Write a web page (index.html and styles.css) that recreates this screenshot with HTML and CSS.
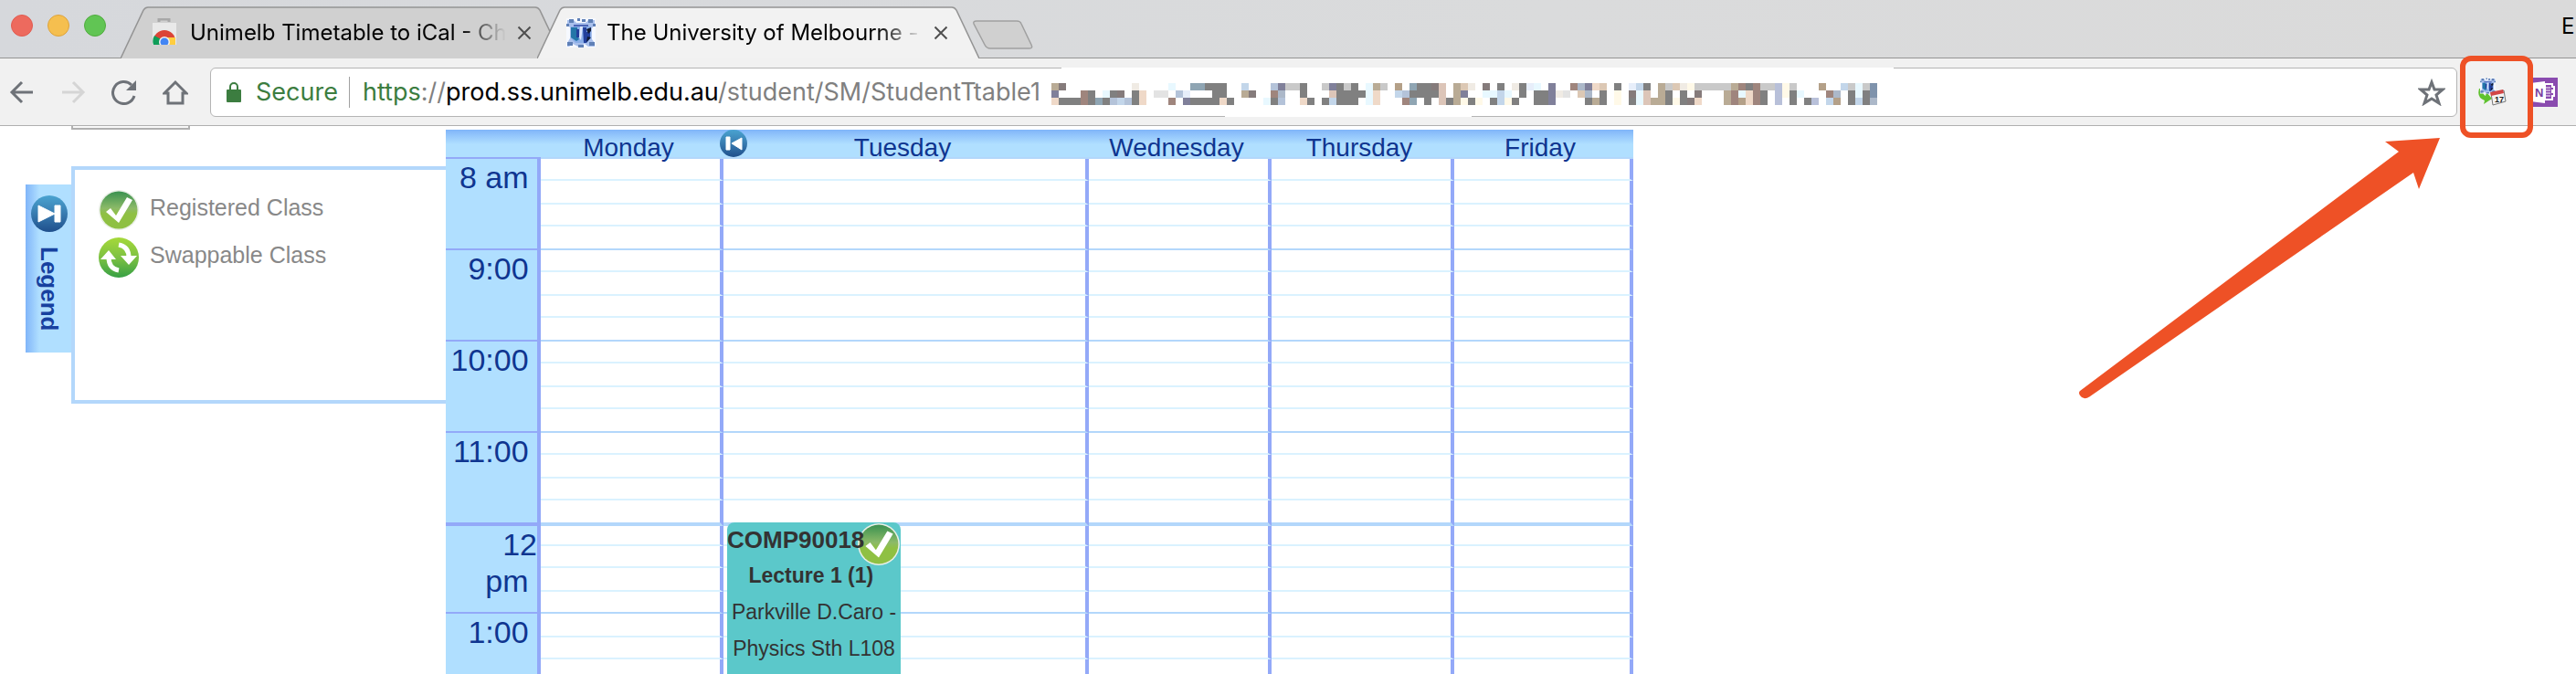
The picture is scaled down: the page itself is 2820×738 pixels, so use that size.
FILE: index.html
```html
<!DOCTYPE html>
<html lang="en">
<head>
<meta charset="utf-8">
<title>The University of Melbourne - Student Timetable</title>
<link rel="stylesheet" href="styles.css">
</head>
<body>
<svg class="defs" aria-hidden="true">
  <defs>
    <linearGradient id="blue" x1="0" y1="0" x2="0" y2="1"><stop offset="0" stop-color="#4aa3d0"/><stop offset=".45" stop-color="#3a80b4"/><stop offset="1" stop-color="#1f4f8c"/></linearGradient>
    <linearGradient id="tickfill" x1="0" y1="0" x2="0" y2="1"><stop offset="0" stop-color="#3a9150"/><stop offset=".45" stop-color="#8cba68"/><stop offset=".6" stop-color="#8fc043"/><stop offset="1" stop-color="#8fc043"/></linearGradient>
    <linearGradient id="swapfill" x1="0" y1="0" x2="0" y2="1"><stop offset="0" stop-color="#a6d93a"/><stop offset=".5" stop-color="#7dc142"/><stop offset="1" stop-color="#37a045"/></linearGradient>
    <symbol id="tick" viewBox="0 0 44 46">
      <circle cx="22" cy="23" r="22" fill="#e9efe6"/><circle cx="22" cy="23" r="20.500" fill="url(#tickfill)"/>
      <path d="M8 25l5-4 6 8L31 9l6 3-15 25z" fill="#fff"/>
    </symbol>
    <symbol id="crest" viewBox="0 0 32 32">
      <rect width="32" height="32" fill="#f6f9ff"/>
      <path d="M1 2h7l3 3h10l3-3h7v5l-3 4v12l3 4v4h-7l-4-3-7 3-6-3-4 3H1v-4l3-5V10L1 7z" fill="#a9c0ec"/>
      <path d="M3 1h5v4H3zM24 1h5v4h-5zM12 0h3v3h-3zM17 1h4v3h-4zM1 26h6v4H1zM25 26h6v4h-6zM13 29h6v3h-6zM0 6h3v3H0zM29 6h3v3h-3z" fill="#5f80b6"/>
      <path d="M5 9h22v13l-5 5H10l-5-5z" fill="#8aaee8"/>
      <path d="M5 10h7v9l2 4-3 2-6-4z" fill="#2376a8"/>
      <path d="M11 12h3v9h-3zM18 10h4v5h4v7l-4 5h-3z" fill="#22409c"/>
      <path d="M15 9h3l-2 15-2-3z" fill="#dfe9ff"/>
      <path d="M22 12l5-2v4l-3 3zM23 20l4 1-5 5z" fill="#111a33"/>
      <path d="M8 7h16v2H8z" fill="#4d66b6"/>
    </symbol>
  </defs>
</svg>

<header class="tabstrip">
  <div class="lights">
    <button class="light light-close" aria-label="Close window"></button>
    <button class="light light-min" aria-label="Minimise window"></button>
    <button class="light light-max" aria-label="Zoom window"></button>
  </div>
  <div class="tabs">
    <div class="tab">
      <svg class="tab-shape" viewBox="0 0 484 56" preserveAspectRatio="none"><path d="M0 56L25 4Q27 1 30 1H454Q457 1 459 4L484 56" fill="#d0d0d0" stroke="#949494" stroke-width="1.500"/></svg>
      <svg class="favicon" viewBox="0 0 32 32">
        <path d="M10 4V1h11v3" fill="none" stroke="#a8a8a8" stroke-width="3"/>
        <path d="M3 5h26v24H3z" fill="#e9e9e9"/>
        <clipPath id="bag"><path d="M3 5h26v24H3z"/></clipPath>
        <g clip-path="url(#bag)"><circle cx="16" cy="25" r="12" fill="#db4437"/><path d="M16 25L5 19a12 12 0 0 0-1 10h10z" fill="#0f9d58"/><path d="M16 21h12v9H18z" fill="#ffcd40"/><circle cx="16" cy="26" r="6" fill="#f1f1f1"/><circle cx="16" cy="26" r="4.500" fill="#4285f4"/></g>
      </svg>
      <span class="tab-title">Unimelb Timetable to iCal - Ch</span>
      <button class="tab-close" aria-label="Close tab"><svg viewBox="0 0 16 16"><path d="M1.500 1.500l13 13M14.500 1.500l-13 13"/></svg></button>
    </div>
    <div class="tab tab-active">
      <svg class="tab-shape" viewBox="0 0 484 56" preserveAspectRatio="none"><path d="M0 56L25 4Q27 1 30 1H454Q457 1 459 4L484 56" fill="#f2f2f2" stroke="#949494" stroke-width="1.500"/></svg>
      <svg class="favicon"><use href="#crest"/></svg>
      <span class="tab-title">The University of Melbourne -</span>
      <button class="tab-close" aria-label="Close tab"><svg viewBox="0 0 16 16"><path d="M1.500 1.500l13 13M14.500 1.500l-13 13"/></svg></button>
    </div>
  </div>
  <button class="newtab" aria-label="New tab"><svg viewBox="0 0 68 32"><path d="M5 1h44q4 0 5 3l11 23q2 4-2 4H20q-4 0-6-4L2 4q-1-3 3-3z" fill="#d0d0d0" stroke="#a0a0a0" stroke-width="1.500"/></svg></button>
  <span class="profile">E</span>
</header>

<div class="toolbar">
  <nav class="nav">
    <button class="icon" aria-label="Back"><svg viewBox="0 0 28 28"><path d="M26 14H3M14 3L3 14l11 11" fill="none" stroke="#6e7278" stroke-width="3"/></svg></button>
    <button class="icon" aria-label="Forward" disabled><svg viewBox="0 0 28 28"><path d="M2 14h23M14 3l11 11-11 11" fill="none" stroke="#d5d5d5" stroke-width="3"/></svg></button>
    <button class="icon" aria-label="Reload"><svg viewBox="0 0 28 28"><path d="M25 18A12 12 0 1 1 22 6" fill="none" stroke="#6e7278" stroke-width="3"/><path d="M27 1v11H16z" fill="#6e7278"/></svg></button>
    <button class="icon" aria-label="Home"><svg viewBox="0 0 28 28"><path d="M2 15L14 3l12 12h-4v11H6V15z" fill="none" stroke="#6e7278" stroke-width="3"/></svg></button>
  </nav>
  <div class="omnibox">
    <svg class="lock" viewBox="0 0 16 22"><path d="M4 9V5a4 4 0 0 1 8 0v4" fill="none" stroke="#3c7d40" stroke-width="2"/><rect y="8" width="16" height="14" rx="1" fill="#3c7d40"/></svg>
    <span class="secure">Secure</span>
    <div class="url" role="textbox" aria-label="Address" contenteditable="true" spellcheck="false"><span class="scheme">https</span><span class="path">://</span>prod.ss.unimelb.edu.au<span class="path">/student/SM/StudentTtable1</span></div>
    <svg class="mosaic" viewBox="0 0 912 54" aria-hidden="true"><path d="M11 0H922V3H11zM190 51H460V54H190z" fill="#fff"/><g id="blocks"></g></svg>
    <button class="icon star" aria-label="Bookmark"><svg viewBox="0 0 30 30"><path d="M15 4l3 8 9 0-7 6 3 9-8-5-8 5 3-9-7-6 9 0z" fill="none" stroke="#6e7278" stroke-width="3"/></svg></button>
  </div>
  <div class="extensions">
    <button class="ext marked" aria-label="Unimelb Timetable to iCal">
      <svg viewBox="0 0 32 32">
        <path d="M2 12q-3 10 6 13l-1 4 9-6-6-7-1 4q-4-2-3-8z" fill="#5fc22f"/>
        <svg x="3" y="0" width="17" height="18"><use href="#crest"/></svg>
        <path d="M15 17l14-3 2 12-14 4z" fill="#f4f4f4" stroke="#777"/><path d="M14 16l14-3 1 4-14 3z" fill="#d24646"/>
        <text class="cal" x="19" y="27">17</text>
      </svg>
    </button>
    <button class="ext" aria-label="OneNote">
      <svg viewBox="0 0 32 32"><rect width="32" height="32" fill="#8a4baf"/><path d="M18 7h8v3h2v4h-2v2h2v4h-2v4h-8z" fill="#8a4baf" stroke="#fff" stroke-width="2"/><path d="M18 11h6M18 14h6M18 17h6M18 20h6" stroke="#fff"/><path d="M2 6l16-2v24L2 26z" fill="#fff"/><text class="note" x="7" y="21">N</text></svg>
    </button>
  </div>
</div>

<main class="page">
  <aside class="side">
    <button class="stub" aria-label="Options"></button>
    <div class="legend">
      <button class="legend-tab"><svg viewBox="0 0 40 40"><circle cx="20" cy="20" r="20" fill="url(#blue)"/><path d="M8 11l18 9-18 9zM26 11h6v18h-6z" fill="#fff" stroke="#fff" stroke-linejoin="round"/></svg><span>Legend</span></button>
      <ul class="legend-panel">
        <li><svg><use href="#tick"/></svg>Registered Class</li>
        <li><svg viewBox="0 0 44 46"><circle cx="22" cy="23" r="22" fill="url(#swapfill)"/><g fill="none" stroke="#fff" stroke-width="5"><path d="M22 9q11 2 11 14M22 37q-11-2-11-14"/></g><path d="M24 21l18 0-9 10zM2 25h17l-8-10z" fill="#fff"/></svg>Swappable Class</li>
      </ul>
    </div>
  </aside>
  <table class="timetable">
    <colgroup><col class="c-time"><col class="c-day"><col class="c-wide"><col class="c-day"><col class="c-day"><col class="c-last"></colgroup>
    <thead><tr><th class="corner"></th><th>Monday</th><th class="has-prev"><button class="prev" aria-label="Collapse"><svg viewBox="0 0 30 30"><circle cx="15" cy="15" r="15" fill="url(#blue)"/><path d="M24 9v13l-11-7zM7 8h4v14H7z" fill="#fff" stroke="#fff" stroke-linejoin="round"/></svg></button>Tuesday</th><th>Wednesday</th><th>Thursday</th><th>Friday</th></tr></thead>
    <tbody>
      <tr class="q1"><th rowspan="4">8 am&nbsp;</th><td></td><td></td><td></td><td></td><td></td></tr>
      <tr class="q2"><td></td><td></td><td></td><td></td><td></td></tr>
      <tr class="q1"><td></td><td></td><td></td><td></td><td></td></tr>
      <tr class="q2 hour"><td></td><td></td><td></td><td></td><td></td></tr>
      <tr class="q1"><th rowspan="4">9:00&nbsp;</th><td></td><td></td><td></td><td></td><td></td></tr>
      <tr class="q2"><td></td><td></td><td></td><td></td><td></td></tr>
      <tr class="q1"><td></td><td></td><td></td><td></td><td></td></tr>
      <tr class="q2 hour"><td></td><td></td><td></td><td></td><td></td></tr>
      <tr class="q1"><th rowspan="4">10:00&nbsp;</th><td></td><td></td><td></td><td></td><td></td></tr>
      <tr class="q2"><td></td><td></td><td></td><td></td><td></td></tr>
      <tr class="q1"><td></td><td></td><td></td><td></td><td></td></tr>
      <tr class="q2 hour"><td></td><td></td><td></td><td></td><td></td></tr>
      <tr class="q1"><th rowspan="4" class="noon">11:00&nbsp;</th><td></td><td></td><td></td><td></td><td></td></tr>
      <tr class="q2"><td></td><td></td><td></td><td></td><td></td></tr>
      <tr class="q1"><td></td><td></td><td></td><td></td><td></td></tr>
      <tr class="q3 hour noon"><td></td><td></td><td></td><td></td><td></td></tr>
      <tr class="q0"><th rowspan="4">12 pm&nbsp;</th><td></td>
        <td class="has-event"><div class="event"><svg><use href="#tick"/></svg><strong class="code">COMP90018</strong><strong class="kind">Lecture 1 (1)&nbsp;</strong><span>Parkville D.Caro -</span><span>Physics Sth L108</span></div></td>
        <td></td><td></td><td></td></tr>
      <tr class="q1"><td></td><td></td><td></td><td></td><td></td></tr>
      <tr class="q2"><td></td><td></td><td></td><td></td><td></td></tr>
      <tr class="q1 hour"><td></td><td></td><td></td><td></td><td></td></tr>
      <tr class="q2"><th rowspan="4">1:00&nbsp;</th><td></td><td></td><td></td><td></td><td></td></tr>
      <tr class="q1"><td></td><td></td><td></td><td></td><td></td></tr>
      <tr class="q2"><td></td><td></td><td></td><td></td><td></td></tr>
      <tr class="q1 hour"><td></td><td></td><td></td><td></td><td></td></tr>
    </tbody>
  </table>
</main>
<svg class="arrow" viewBox="0 0 396 288" aria-hidden="true"><path d="M1 278L350 16 335 5 395 1 372 57 366 39 12 284Q5 289 1 283 -1 280 1 278z" fill="#ee5126"/></svg>
<script src="mosaic.js"></script>
</body>
</html>
```
FILE: styles.css
```css
* { box-sizing: border-box; }
html, body { height: 100%; margin: 0; }
body { display: flex; flex-direction: column; position: relative; overflow: hidden; background: #fff; font-family: Inter, "Liberation Sans", sans-serif; }
button { padding: 0; border: 0; background: none; font: inherit; color: inherit; }
svg { display: block; }
.defs { position: absolute; width: 0; height: 0; }

.tabstrip { display: flex; align-items: flex-end; flex: none; height: 64px; border-bottom: 1px solid #949494; background: linear-gradient(90deg, #d6d8dc, #dadbdc 60%, #dadada); }
.lights { display: flex; align-self: flex-start; gap: 16px; padding: 16px 16px 0 12px; }
.light { width: 24px; height: 24px; border: 1px solid #e15b50; border-radius: 50%; background: #ed6a5e; }
.light-min { border-color: #dda33c; background: #f5bf4f; }
.light-max { border-color: #50ac3e; background: #61c554; }
.tabs { display: flex; margin-bottom: -1px; }
.tab { display: flex; align-items: center; gap: 12px; position: relative; width: 484px; height: 57px; padding: 0 34px 0 32px; }
.tab + .tab { margin-left: -28px; }
.tab-shape { position: absolute; inset: 0; width: 100%; height: 100%; }
.favicon { position: relative; flex: none; width: 32px; height: 32px; }
.tab-title { flex: 1; position: relative; overflow: hidden; white-space: nowrap; font-size: 24px; line-height: 32px; -webkit-mask-image: linear-gradient(90deg, #000 86%, transparent); mask-image: linear-gradient(90deg, #000 86%, transparent); }
.tab-close { position: relative; }
.tab-close svg { width: 16px; height: 16px; fill: none; stroke: #4f4f4f; stroke-width: 2; }
.newtab { align-self: flex-start; padding-top: 22px; margin-left: -8px; }
.newtab svg { width: 68px; height: 32px; }
.profile { align-self: flex-start; width: 16px; margin-left: auto; padding-top: 14px; font-size: 24px; line-height: 30px; }

.toolbar { display: flex; align-items: center; flex: none; height: 74px; padding-right: 20px; border-bottom: 1px solid #b0b0b0; background: #f1f1f1; }
.nav { display: flex; gap: 28px; padding: 0 24px 0 10px; }
.icon svg { width: 28px; height: 28px; }
.omnibox { display: flex; align-items: center; flex: 1; height: 54px; padding: 0 12px 0 17px; border: 1px solid #b4b4b4; border-radius: 6px; background: #fff; font-size: 27px; line-height: 34px; }
.lock { width: 16px; height: 22px; margin-right: 16px; }
.secure { margin-right: 12px; color: #3c7d40; }
.url { padding-left: 14px; border-left: 1px solid #a0a0a0; white-space: nowrap; outline: none; }
.scheme { color: #3c7d40; }
.path { color: #808080; }
.mosaic { flex: none; width: 912px; height: 54px; margin: -1px 0 -1px 12px; overflow: visible; }
.star { margin-left: auto; }
.star svg { width: 30px; height: 30px; }
.extensions { display: flex; gap: 24px; padding-left: 22px; }
.ext { position: relative; }
.ext svg { width: 32px; height: 32px; }
.ext svg svg { width: 17px; height: 18px; }
.marked::after { content: ""; position: absolute; z-index: 2; inset: -24px -29px -34px -19px; border: 6px solid #ee5126; border-radius: 12px; }
.cal { fill: #222; font: bold 9px "Liberation Sans", sans-serif; }
.note { fill: #7a3fa0; font: bold 13px "Liberation Sans", sans-serif; }

.page { display: flex; flex: 1; min-height: 0; overflow: hidden; font-family: "Liberation Sans", Arial, sans-serif; }
.side { display: flex; flex-direction: column; flex: none; width: 488px; }
.stub { width: 130px; height: 4px; margin-left: 78px; border: 2px solid #b0b0b0; border-top: 0; background: #f8f8f8; }
.legend { display: flex; margin-top: 40px; padding-left: 28px; align-items: flex-start; }
.legend-tab { display: flex; flex-direction: column; align-items: center; gap: 16px; width: 50px; height: 184px; margin-top: 20px; padding: 12px 2px 0 4px; background: linear-gradient(90deg, #80b5f9, #b0dfff 30%); color: #17419f; font-size: 26px; font-weight: bold; line-height: 30px; }
.legend-tab svg { width: 40px; height: 40px; }
.legend-tab span { writing-mode: vertical-rl; }
.legend-panel { flex: 1; height: 260px; margin: 0; padding: 21px 0 0 26px; border: 4px solid #b3d7fb; border-right: 0; list-style: none; color: #888; font-size: 25px; }
.legend-panel li { display: flex; align-items: center; gap: 12px; height: 46px; margin-bottom: 6px; line-height: 40px; padding-bottom: 6px; }
.legend-panel svg { flex: none; width: 44px; height: 46px; margin-bottom: -6px; }

.timetable { align-self: flex-start; width: 1300px; margin-top: 4px; border-spacing: 0; table-layout: fixed; color: #0f3590; }
.c-time { width: 104px; }
.c-day { width: 200px; }
.c-wide { width: 400px; }
.c-last { width: 196px; }
.timetable thead tr { height: 32px; background: linear-gradient(#80b5f9, #b0dfff 50%); }
.timetable thead th { padding: 11px 8px 1px 0; border-bottom: 2px solid #b3d7fb; font-size: 28px; font-weight: normal; line-height: 18px; }
.timetable thead .corner { border-color: #93a9f8; }
.has-prev { position: relative; }
.prev { position: absolute; left: -4px; top: 0; }
.prev svg { width: 30px; height: 30px; }
.timetable tbody th { padding: 0; border-right: 4px solid #93a9f8; border-bottom: 2px solid #93a9f8; background: #b0dfff; font-size: 34px; font-weight: normal; line-height: 40px; text-align: right; vertical-align: top; }
.timetable td { padding: 0; border-right: 4px solid #93a9f8; border-bottom: 2px solid #daf2ff; }
.timetable .hour td { border-bottom-color: #b3d7fb; }
.timetable .noon td, .timetable th.noon { border-bottom-width: 4px; }
.q0 { height: 22px; }
.q1 { height: 24px; }
.q2 { height: 26px; }
.q3 { height: 28px; }
.has-event { position: relative; }
.event { display: flex; flex-direction: column; position: absolute; z-index: 1; top: -4px; left: 4px; width: 190px; height: 200px; border-radius: 8px; background: #5bc8ca; color: #333; font-size: 23px; line-height: 40px; text-align: center; white-space: nowrap; }
.event svg { position: absolute; right: 0; top: 0; width: 48px; height: 48px; }
.event .code { position: relative; text-align: left; font-size: 26px; line-height: 38px; }

.arrow { position: absolute; right: 148px; top: 150px; width: 396px; height: 288px; }
```
FILE: mosaic.js
```js
// Censored part of the address: three rows of 8px blocks.
// Each run is a start column followed by one palette letter per block.
const palette = {
  g: '#808080', t: '#b9ab95', k: '#b4a088', b: '#9f857d', v: '#80809a', w: '#857b7b',
  p: '#efd9c8', q: '#dcc5b8', s: '#dcc8b4', c: '#c9c9c9', d: '#e3e3e3', l: '#b4c3d9',
  m: '#c3d6ea', n: '#8fa5b3', i: '#e8f8ff', e: '#e7eefa', y: '#fff9e8', f: '#f0ebe4',
  a: '#acb8c9', o: '#b8c0d9', u: '#7f93ac'
};
const rows = [
  '0tw 11f 16i 19nnggg 26m 30lv 32ccg 37cvgcg 43itc 47k 49nggwq 55tsf 59w 61g 63fgei 68v 71bavps 77g 79emg 83tcsfyccccctb 95gbccoyc 105k 108mcicu',
  '0v 4bg 7ig 9w 11gp 14dd 17le 22gg 26tw 30ba 34g 38qgggg 43ip 47mlgggg 53q 55tv 59iimi 64g 66ggvfd 72sa 75g 77y 79wiq 83tg 86g 88w 92tbipbg 99oyg 102i 106ba 109gigu',
  '0pggg 4bgnglmlgp 16b 18vggggpg 29igl 34pg 37gmggg 43ip 48bn 51g 53qgtygy 60gmyg 66ggv 73gtg 77y 79giqttgygwp 92tbkpbg 99o 101g 103go 106mk 109gmga'
];
const group = document.getElementById('blocks');
rows.forEach((row, r) => {
  for (const [, start, run] of row.matchAll(/(\d+)([a-z]+)/g)) {
    [...run].forEach((key, i) => {
      const block = document.createElementNS('http://www.w3.org/2000/svg', 'rect');
      block.setAttribute('x', (Number(start) + i) * 8);
      block.setAttribute('y', 17 + r * 8);
      block.setAttribute('width', 8);
      block.setAttribute('height', 8);
      block.setAttribute('fill', palette[key]);
      group.append(block);
    });
  }
});
```
